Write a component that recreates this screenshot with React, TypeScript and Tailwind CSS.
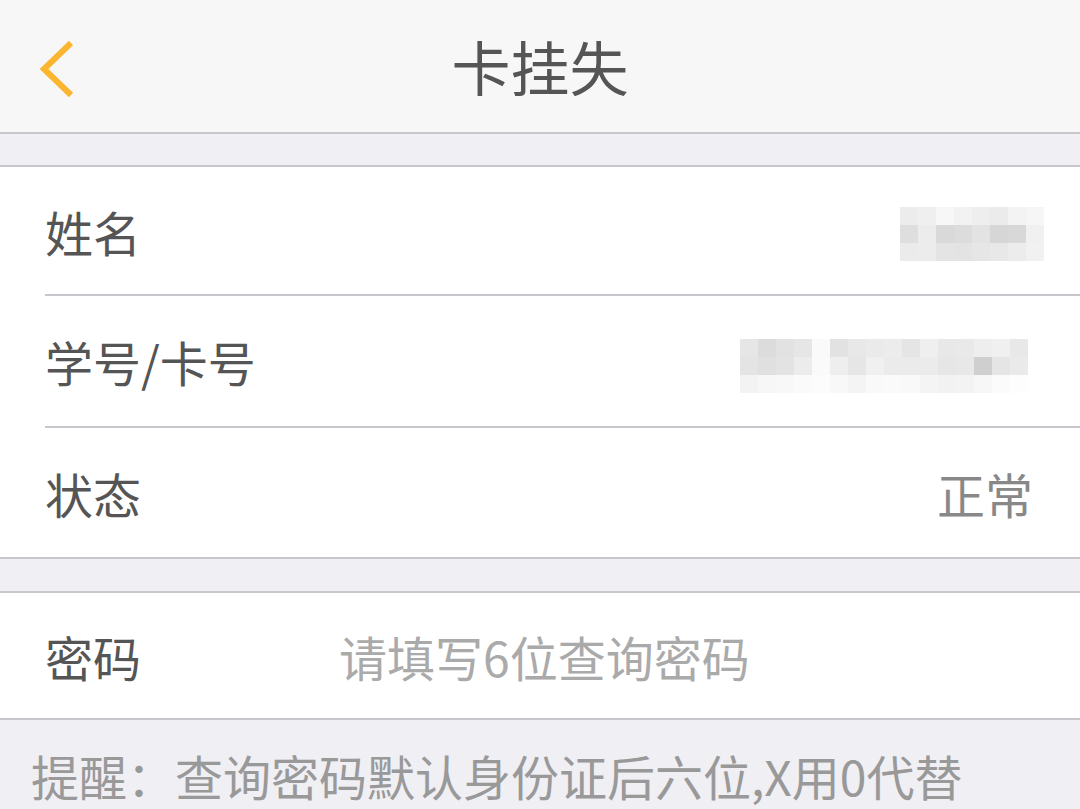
import React from 'react';

const FONT = { fontFamily: '"Noto Sans CJK SC", "Noto Sans", sans-serif' };

const mosaicName = [
  ['#ececec', '#efefef', '#f7f7f7', '#f2f2f2', '#eeeeee', '#ebebeb', '#f3f3f3', '#f6f6f6'],
  ['#dedede', '#ececec', '#d9d9d9', '#dcdcdc', '#e3e3e3', '#d6d6d6', '#d8d8d8', '#f0f0f0'],
  ['#ebebeb', '#ececec', '#e4e4e4', '#e3e3e3', '#e6e6e6', '#e8e8e8', '#ececec', '#f1f1f1'],
];

const mosaicCard = [
  ['#e6e6e6', '#dcdcdc', '#e2e2e2', '#e6e6e6', '#fafafa', '#e2e2e2', '#e8e8e8', '#eaeaea', '#ececec', '#e5e5e5', '#efefef', '#e8e8e8', '#e9e9e9', '#eeeeee', '#f0f0f0', '#e8e8e8'],
  ['#e4e4e4', '#e0e0e0', '#e3e3e3', '#ececec', '#fafafa', '#eeeeee', '#e6e6e6', '#f0f0f0', '#ebebeb', '#ebebeb', '#ebebeb', '#e6e6e6', '#e8e8e8', '#cfcfcf', '#e5e5e5', '#eaeaea'],
  ['#f3f3f3', '#f7f7f7', '#f8f8f8', '#fafafa', '#fcfcfc', '#f8f8f8', '#f4f4f4', '#f9f9f9', '#fafafa', '#f9f9f9', '#f4f4f4', '#f2f2f2', '#f3f3f3', '#f7f7f7', '#fbfbfb', '#fdfdfd'],
];

const Mosaic = ({ cells }: { cells: string[][] }) => (
  <div className="flex flex-col blur-[0.6px]">
    {cells.map((row, i) => (
      <div key={i} className="flex">
        {row.map((c, j) => (
          <div key={j} className="w-[18px] h-[18px]" style={{ backgroundColor: c }} />
        ))}
      </div>
    ))}
  </div>
);

const App = () => {
  return (
    <div className="w-[1080px] h-[809px] overflow-hidden bg-[#efeff4] text-[#555555]" style={FONT}>
      {/* header */}
      <div className="relative h-[134px] bg-[#f7f7f7] border-b-2 border-[#c8c7cc] flex items-center justify-center">
        <svg className="absolute left-[37px] top-[37px]" width="44" height="64" viewBox="0 0 44 64">
          <path d="M34 6 L7 32 L34 58" fill="none" stroke="#fbb52f" strokeWidth="6" strokeLinecap="butt" strokeLinejoin="miter" />
        </svg>
        <span className="text-[59px] leading-none text-[#555555] -mt-[2px]">卡挂失</span>
      </div>

      <div className="h-[33px] border-b-2 border-[#c8c7cc]" />

      {/* info group */}
      <div className="bg-white border-b-2 border-[#c8c7cc]">
        <div className="flex">
          <div className="w-[45px]" />
          <div className="flex-1 flex items-center justify-between h-[129px] border-b-2 border-[#c8c7cc] pr-[36px]">
            <span className="text-[48px] leading-none">姓名</span>
            <div className="mt-[6px]">
              <Mosaic cells={mosaicName} />
            </div>
          </div>
        </div>
        <div className="flex">
          <div className="w-[45px]" />
          <div className="flex-1 flex items-center justify-between h-[132px] border-b-2 border-[#c8c7cc] pr-[52px]">
            <span className="text-[48px] leading-none">学号/卡号</span>
            <div className="mt-[10px]">
              <Mosaic cells={mosaicCard} />
            </div>
          </div>
        </div>
        <div className="flex items-center justify-between h-[129px] pl-[45px] pr-[47px]">
          <span className="text-[48px] leading-none">状态</span>
          <span className="text-[48px] leading-none text-[#888888]">正常</span>
        </div>
      </div>

      <div className="h-[34px] border-b-2 border-[#c8c7cc]" />

      {/* password */}
      <div className="bg-white border-b-2 border-[#c8c7cc] h-[127px] flex items-center pl-[45px]">
        <span className="w-[294px] text-[48px] leading-none">密码</span>
        <span className="text-[48px] leading-none text-[#aaaaaa]">请填写6位查询密码</span>
      </div>

      <div className="pl-[31px] pt-[31px] text-[48px] leading-[48px] text-[#999999] whitespace-nowrap">
        提醒：查询密码默认身份证后六位,X用0代替
      </div>
    </div>
  );
};

export default App;
